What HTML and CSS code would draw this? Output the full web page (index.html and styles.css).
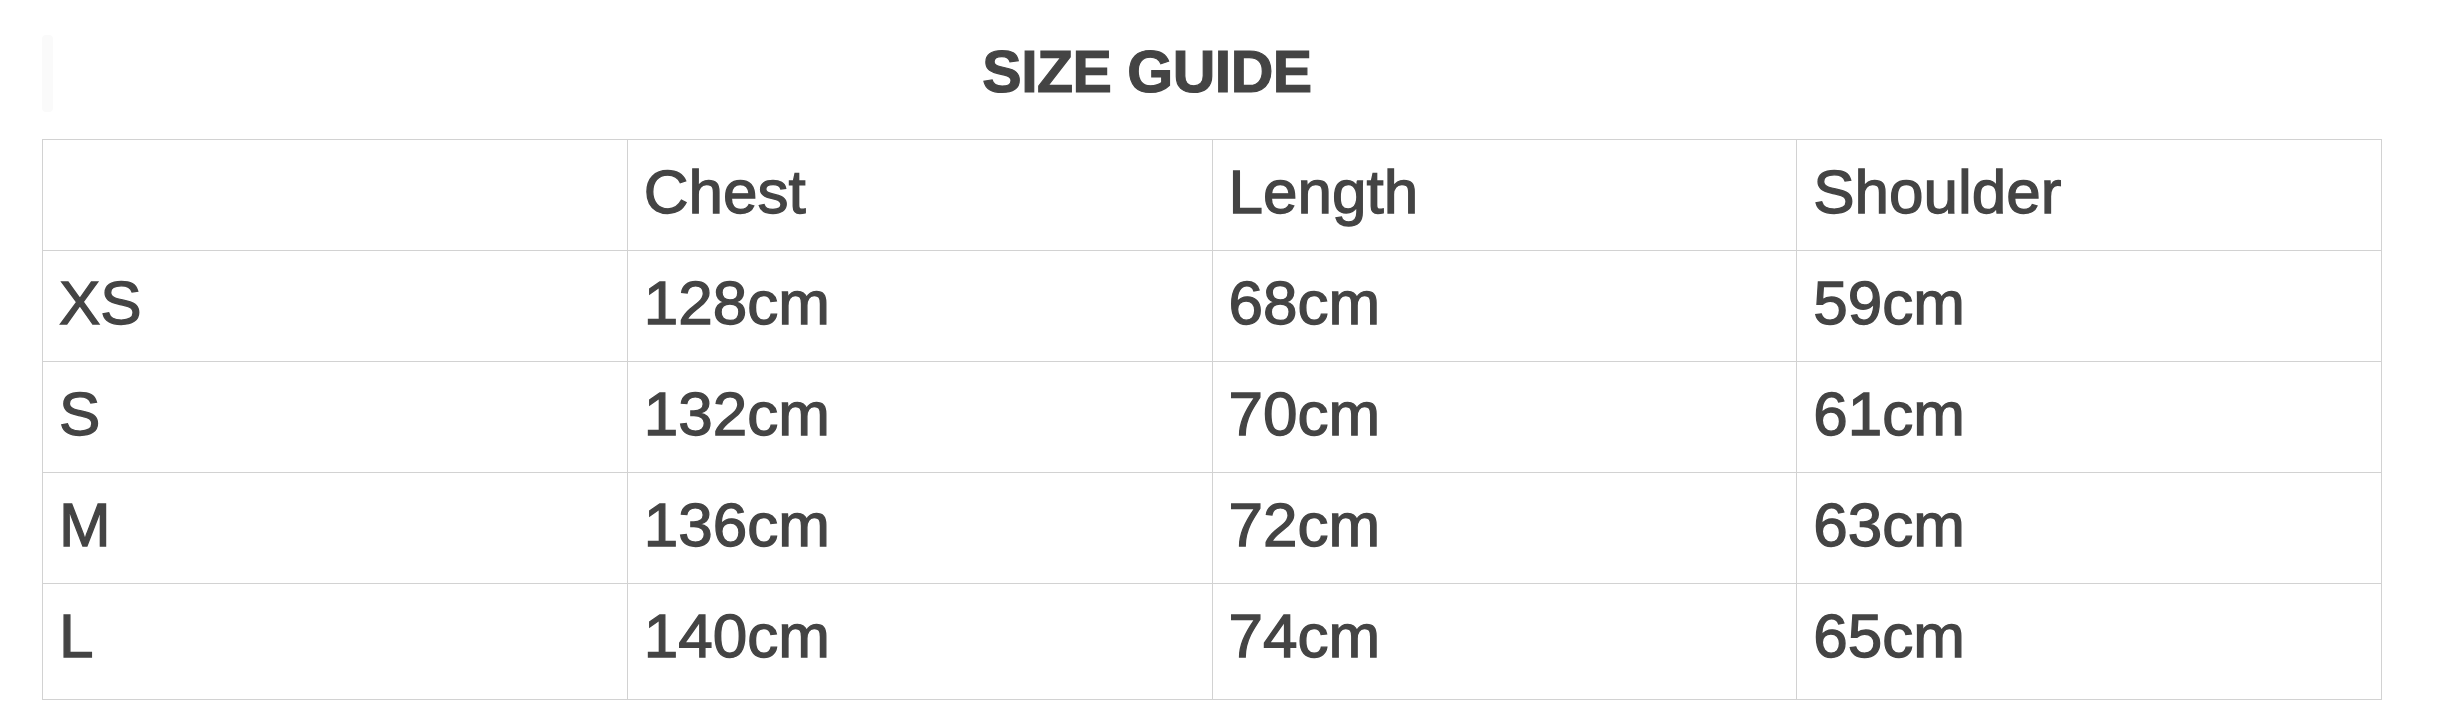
FILE: index.html
```html
<!DOCTYPE html>
<html>
<head>
<meta charset="utf-8">
<link rel="stylesheet" href="styles.css">
</head>
<body>
<div class="page">
  <div class="title-row">
    <div class="ghost"></div>
    <h1 class="title">SIZE GUIDE</h1>
  </div>
  <table class="sizes">
    <tr><td></td><td>Chest</td><td>Length</td><td>Shoulder</td></tr>
    <tr><td>XS</td><td>128cm</td><td>68cm</td><td>59cm</td></tr>
    <tr><td>S</td><td>132cm</td><td>70cm</td><td>61cm</td></tr>
    <tr><td>M</td><td>136cm</td><td>72cm</td><td>63cm</td></tr>
    <tr class="last"><td>L</td><td>140cm</td><td>74cm</td><td>65cm</td></tr>
  </table>
</div>
</body>
</html>
```
FILE: styles.css
```css
html, body {
  margin: 0;
  padding: 0;
  background: #ffffff;
}
.page {
  padding: 35px 0 0 42px;
  width: 2340px;
  font-family: "Liberation Sans", Arial, sans-serif;
  color: #444444;
}
.title-row {
  display: flex;
  align-items: flex-start;
  height: 104px;
}
.ghost {
  width: 11px;
  height: 77px;
  background: #fafafa;
  border-radius: 4px;
}
.title {
  flex: 1;
  margin: 2px 0 0 0;
  padding-right: 141px;
  text-align: center;
  font-size: 59px;
  font-weight: 700;
  line-height: 70px;
  letter-spacing: -0.5px;
  -webkit-text-stroke: 1.2px #444444;
}
.sizes {
  width: 2340px;
  table-layout: fixed;
  border-collapse: collapse;
}
.sizes td {
  border: 1px solid #d2d2d2;
  padding: 16px 16px 22px 16px;
  height: 72px;
  font-size: 62px;
  line-height: 72px;
  vertical-align: top;
  box-sizing: content-box;
  -webkit-text-stroke: 1.3px #444444;
}
.sizes .last td {
  padding-bottom: 27px;
}
```
